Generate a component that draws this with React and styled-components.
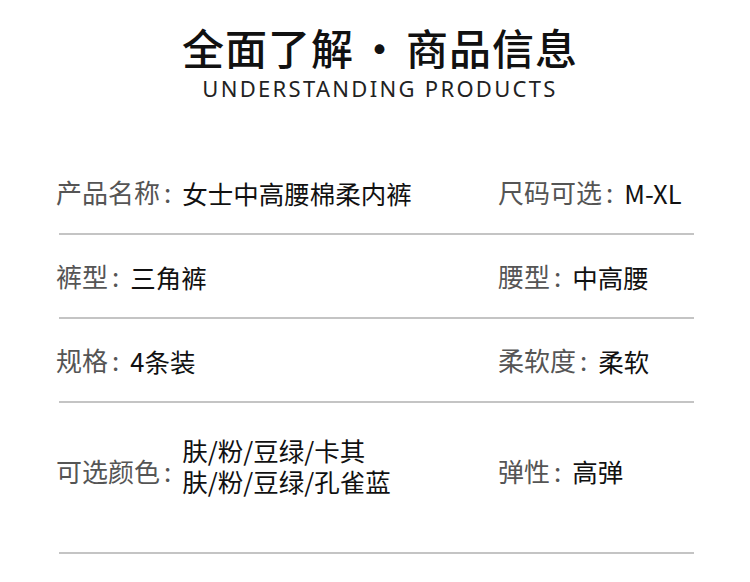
import React from "react";
import styled, { createGlobalStyle } from "styled-components";

const Global = createGlobalStyle`
  html, body { margin: 0; padding: 0; background: #fff; }
  body { font-family: "Noto Sans CJK SC", "Noto Sans", sans-serif; }
`;

const Page = styled.div`
  width: 750px;
  height: 582px;
  background: #fff;
  overflow: hidden;
`;

const Header = styled.header`
  display: flex;
  flex-direction: column;
  align-items: center;
  padding: 20px 0 0 10px;
  height: 131px;
`;

const Title = styled.h1`
  margin: 0;
  font-size: 42px;
  font-weight: 500;
  letter-spacing: 1px;
  line-height: 54px;
  color: #111;
  display: flex;
  align-items: center;
`;

const Dot = styled.span`
  display: inline-block;
  width: 52px;
  text-align: center;
`;

const Subtitle = styled.div`
  font-family: "Noto Sans", sans-serif;
  font-size: 22px;
  font-weight: 400;
  letter-spacing: 2.3px;
  line-height: 28px;
  color: #222;
`;

const Table = styled.div`
  margin: 0 56px;
`;

const Row = styled.div`
  display: grid;
  grid-template-columns: 442px 1fr;
  align-items: center;
  height: ${(p) => p.$h}px;
  padding-bottom: ${(p) => p.$pb || 0}px;
  box-sizing: border-box;
  border-bottom: 2px solid #c4c4c4;
  margin-left: 3px;
  & > * { margin-left: -3px; }
`;

const Cell = styled.div`
  display: flex;
  align-items: center;
`;

const Label = styled.span`
  font-size: 26px;
  color: #555;
  line-height: 32px;
  white-space: nowrap;
`;

const Colon = styled.span`
  margin: 0 11px 0 4px;
`;

const Value = styled.span`
  font-size: 25.5px;
  color: #111;
  line-height: 31px;
  white-space: nowrap;
  margin-bottom: ${(p) => p.$lift || 0}px;
`;

const Item = ({ label, lift, children }) => (
  <Cell>
    <Label>
      {label}
      <Colon>:</Colon>
    </Label>
    <Value $lift={lift}>{children}</Value>
  </Cell>
);

export default function App() {
  return (
    <Page>
      <Global />
      <Header>
        <Title>
          全面了解<Dot>·</Dot>商品信息
        </Title>
        <Subtitle>UNDERSTANDING PRODUCTS</Subtitle>
      </Header>
      <Table>
        <Row $h={84}>
          <Item label="产品名称">女士中高腰棉柔内裤</Item>
          <Item label="尺码可选">M-XL</Item>
        </Row>
        <Row $h={84}>
          <Item label="裤型">三角裤</Item>
          <Item label="腰型">中高腰</Item>
        </Row>
        <Row $h={84}>
          <Item label="规格">4条装</Item>
          <Item label="柔软度">柔软</Item>
        </Row>
        <Row $h={151} $pb={14}>
          <Item label="可选颜色" lift={12}>
            肤/粉/豆绿/卡其
            <br />
            肤/粉/豆绿/孔雀蓝
          </Item>
          <Item label="弹性">高弹</Item>
        </Row>
      </Table>
    </Page>
  );
}
